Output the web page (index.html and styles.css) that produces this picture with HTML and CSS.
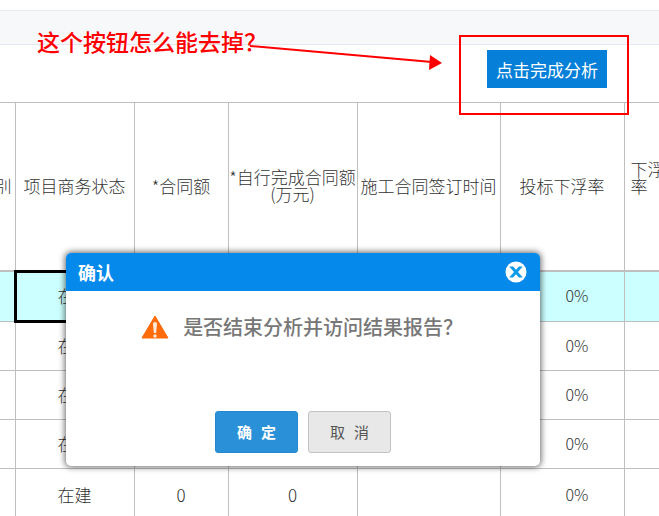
FILE: index.html
```
<!DOCTYPE html>
<html lang="zh-CN">
<head>
    <meta charset="UTF-8">
    <meta name="viewport" content="width=device-width, initial-scale=1.0">
    <title>分析</title>
    <link rel="stylesheet" href="styles.css">
</head>
<body>
    <div id="band"></div>
    <div id="toolbar">
        <button type="button" id="finish">点击完成分析</button>
    </div>

    <div id="scroll">
    <table id="sheet">
        <colgroup>
            <col class="c-type">
            <col class="c-state">
            <col class="c-sum">
            <col class="c-own">
            <col class="c-time">
            <col class="c-rate">
            <col class="c-last">
        </colgroup>
        <thead>
            <tr>
                <th><div class="cut">别</div></th>
                <th>项目商务状态</th>
                <th>*合同额</th>
                <th>*自行完成合同额<br>(万元)</th>
                <th>施工合同签订时间</th>
                <th>投标下浮率</th>
                <th class="left">下浮<br>率（</th>
            </tr>
        </thead>
        <tbody>
            <tr class="active">
                <td></td><td class="selected">在建</td><td></td><td></td><td></td><td class="rate">0%</td><td></td>
            </tr>
            <tr>
                <td></td><td>在建</td><td></td><td></td><td></td><td class="rate">0%</td><td></td>
            </tr>
            <tr>
                <td></td><td>在建</td><td></td><td></td><td></td><td class="rate">0%</td><td></td>
            </tr>
            <tr>
                <td></td><td>在建</td><td></td><td></td><td></td><td class="rate">0%</td><td></td>
            </tr>
            <tr class="tall">
                <td></td><td>在建</td><td>0</td><td>0</td><td></td><td class="rate">0%</td><td></td>
            </tr>
        </tbody>
    </table>
    </div>

    <div id="dialog" role="dialog" aria-labelledby="dialog-title">
        <div id="dialog-head">
            <span id="dialog-title">确认</span>
            <button type="button" id="close" aria-label="关闭">
                <svg width="22" height="22" viewBox="0 0 22 22">
                    <circle cx="11" cy="11" r="10.5" fill="#fff"/>
                    <path d="M4.2 5.5h4L11 8.8l2.9-3.3h3.8L13 11l4.8 5.5h-4L11 13.2l-2.9 3.3H4.2L9 11z" fill="#109be8"/>
                </svg>
            </button>
        </div>
        <div id="message">
            <svg width="28" height="24" viewBox="0 0 28 24">
                <path d="M14 1L27 23H1z" fill="#ff6a0a" stroke="#ff6a0a" stroke-linejoin="round"/>
                <path d="M12 9q0-2 2-2t2 2l-.8 9h-2.4z" fill="#ffe9d8"/>
                <circle cx="14" cy="21" r="1.7" fill="#ffe9d8"/>
            </svg>
            <span>是否结束分析并访问结果报告？</span>
        </div>
        <div id="actions">
            <button type="button" id="ok">确 定</button>
            <button type="button" id="cancel">取 消</button>
        </div>
    </div>

    <!-- red note on top of the page -->
    <div id="note">这个按钮怎么能去掉？</div>
    <svg id="marks" width="640" height="120" viewBox="0 0 640 120">
        <rect x="460" y="36" width="168" height="78" fill="none" stroke="#f00" stroke-width="2"/>
        <path d="M250 46L432 62" stroke="#f00" stroke-width="2"/>
        <path d="M430 55L442 63L429 70z" fill="#f00"/>
    </svg>
</body>
</html>
```

FILE: styles.css
```
*{
    box-sizing: border-box;
}
body{
    margin: 0;
    padding-top: 10px;
    position: relative;
    min-height: 100vh;
    overflow: hidden;
    background: #fff;
    color: #333;
    font-family: "Noto Sans CJK SC", sans-serif;
}
button{
    font-family: inherit;
    padding: 0;
    border: 0;
    cursor: pointer;
}
#band{
    height: 35px;
    background: #f6f8fa;
    border-top: 1px solid #e8eaf1;
    border-bottom: 1px solid #e5e7ee;
}
#toolbar{
    display: flex;
    justify-content: flex-end;
    padding: 5px 52px 14px 0;
}
#finish{
    width: 120px;
    height: 38px;
    background: #057fd8;
    color: #fff;
    font-size: 17px;
}

/* sheet */
#scroll{
    overflow: hidden;
}
#sheet{
    width: 100%;
    table-layout: fixed;
    border-collapse: collapse;
    font-size: 17px;
    line-height: 17px;
}
.c-type{ width: 15px; }
.c-state{ width: 119px; }
.c-sum{ width: 94px; }
.c-own{ width: 129px; }
.c-time{ width: 143px; }
.c-rate{ width: 124px; }
#sheet th, #sheet td{
    padding: 0 0 2px;
    border: 1px solid #bfbfbf;
    border-left: 0;
    text-align: center;
    font-weight: 300;
    white-space: nowrap;
}
#sheet th:last-child, #sheet td:last-child{
    border-right: 0;
}
#sheet th{
    height: 168px;
    border-bottom: 2px solid #bfbfbf;
}
#sheet td{
    height: 49px;
}
#sheet th.left{
    padding: 0 0 18px 6px;
    text-align: left;
}
#sheet td.rate{
    padding-left: 30px;
    font-size: 16px;
}
.cut{
    display: flex;
    justify-content: flex-end;
    overflow: hidden;
    padding-right: 3px;
}
#sheet .active td{
    height: 51px;
    background: #ccffff;
}
#sheet td.selected{
    outline: 3px solid #000;
    outline-offset: -2px;
}
#sheet .tall td{
    height: 54px;
}

/* confirm dialog */
#dialog{
    position: absolute;
    left: 10%;
    top: 253px;
    width: 72%;
    background: #fff;
    border-radius: 5px;
    box-shadow: 0 0 6px 1px rgba(0,0,0,0.6);
    overflow: hidden;
}
#dialog-head{
    display: flex;
    align-items: center;
    justify-content: space-between;
    height: 38px;
    padding: 0 13px 0 12px;
    background: #058aec;
    color: #fff;
    font-size: 18px;
    font-weight: bold;
}
#close{
    display: flex;
    background: none;
}
#message{
    display: flex;
    align-items: center;
    justify-content: center;
    gap: 14px;
    padding: 20px 2px 0 0;
    line-height: 32px;
    font-size: 20px;
    font-weight: 500;
    color: #777;
}
#actions{
    display: flex;
    justify-content: center;
    gap: 10px;
    padding: 68px 0 13px;
}
#ok, #cancel{
    width: 83px;
    height: 42px;
    border-radius: 3px;
    font-family: "Liberation Mono", "Noto Sans CJK SC", monospace;
    font-size: 15px;
}
#ok{
    background: #2a91d8;
    border: 1px solid #2588cc;
    color: #fff;
    font-weight: bold;
}
#cancel{
    background: #e8e8e8;
    border: 1px solid #c2c2c2;
    color: #555;
}

/* note */
#note{
    position: absolute;
    left: 37px;
    top: 25px;
    color: #f00;
    font-size: 23px;
    line-height: 32px;
    font-weight: 500;
}
#marks{
    position: absolute;
    left: 0;
    top: 0;
    pointer-events: none;
}
```
